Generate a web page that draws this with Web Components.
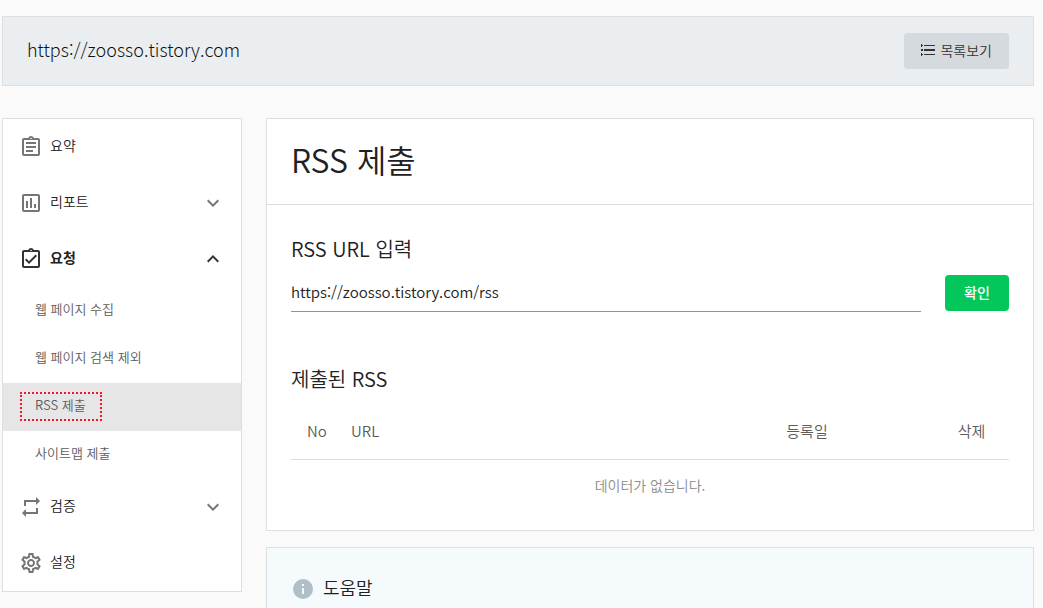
<!DOCTYPE html>
<html lang="ko">
<head>
<meta charset="utf-8">
<meta name="viewport" content="width=device-width, initial-scale=1">
<title>RSS 제출</title>
<style>
  :root{
    --text:#212121;
    --sub:#5c5c5c;
    --muted:#8c8c8c;
    --line:#dedfe0;
    --green:#03c75a;
  }
  body{
    margin:0;
    background:#fafafa;
    color:var(--text);
    font:14px/20px "Noto Sans CJK KR",sans-serif;
    font-weight:350;
  }
</style>
</head>
<body>
<webmaster-app></webmaster-app>

<script>
// path data for the 24px icon grid
const ICONS = {
  summary: 'M7 15h7v2H7zm0-4h10v2H7zm0-4h10v2H7zm12-4h-4.18C14.4 1.84 13.3 1 12 1c-1.3 0-2.4.84-2.82 2H5c-1.1 0-2 .9-2 2v14c0 1.1.9 2 2 2h14c1.1 0 2-.9 2-2V5c0-1.1-.9-2-2-2zm-7-.25c.41 0 .75.34.75.75s-.34.75-.75.75-.75-.34-.75-.75.34-.75.75-.75zM19 19H5V5h14v14z',
  report: 'M19 3H5c-1.1 0-2 .9-2 2v14c0 1.1.9 2 2 2h14c1.1 0 2-.9 2-2V5c0-1.1-.9-2-2-2zm0 16H5V5h14v14zM7 10h2v7H7zm4-3h2v10h-2zm4 6h2v4h-2z',
  request: 'M18 9l-1.41-1.42L10 14.17l-2.59-2.58L6 13l4 4zm1-6h-4.18C14.4 1.84 13.3 1 12 1c-1.3 0-2.4.84-2.82 2H5c-1.1 0-2 .9-2 2v14c0 1.1.9 2 2 2h14c1.1 0 2-.9 2-2V5c0-1.1-.9-2-2-2zm-7-.25c.41 0 .75.34.75.75s-.34.75-.75.75-.75-.34-.75-.75.34-.75.75-.75zM19 19H5V5h14v14z',
  verify: 'M7 7h10v3l4-4-4-4v3H5v6h2V7zm10 10H7v-3l-4 4 4 4v-3h12v-6h-2v4z',
  settings: 'M19.43 12.98c.04-.32.07-.64.07-.98 0-.34-.03-.66-.07-.98l2.11-1.65c.19-.15.24-.42.12-.64l-2-3.46c-.09-.16-.26-.25-.44-.25-.06 0-.12.01-.17.03l-2.49 1c-.52-.4-1.08-.73-1.69-.98l-.38-2.65C14.46 2.18 14.25 2 14 2h-4c-.25 0-.46.18-.49.42l-.38 2.65c-.61.25-1.17.59-1.69.98l-2.49-1c-.06-.02-.12-.03-.18-.03-.17 0-.34.09-.43.25l-2 3.46c-.13.22-.07.49.12.64l2.11 1.65c-.04.32-.07.65-.07.98 0 .33.03.66.07.98l-2.11 1.65c-.19.15-.24.42-.12.64l2 3.46c.09.16.26.25.44.25.06 0 .12-.01.17-.03l2.49-1c.52.4 1.08.73 1.69.98l.38 2.65c.03.24.24.42.49.42h4c.25 0 .46-.18.49-.42l.38-2.65c.61-.25 1.17-.59 1.69-.98l2.49 1c.06.02.12.03.18.03.17 0 .34-.09.43-.25l2-3.46c.12-.22.07-.49-.12-.64l-2.11-1.65zm-1.98-1.71c.04.31.05.52.05.73 0 .21-.02.43-.05.73l-.14 1.13.89.7 1.08.84-.7 1.21-1.27-.51-1.04-.42-.9.68c-.43.32-.84.56-1.25.73l-1.06.43-.16 1.13-.2 1.35h-1.4l-.19-1.35-.16-1.13-1.06-.43c-.43-.18-.83-.41-1.23-.71l-.91-.7-1.06.43-1.27.51-.7-1.21 1.08-.84.89-.7-.14-1.13c-.03-.31-.05-.54-.05-.74s.02-.43.05-.73l.14-1.13-.89-.7-1.08-.84.7-1.21 1.27.51 1.04.42.9-.68c.43-.32.84-.56 1.25-.73l1.06-.43.16-1.13.2-1.35h1.39l.19 1.35.16 1.13 1.06.43c.43.18.83.41 1.23.71l.91.7 1.06-.43 1.27-.51.7 1.21-1.07.85-.89.7.14 1.13zM12 8c-2.21 0-4 1.79-4 4s1.79 4 4 4 4-1.79 4-4-1.79-4-4-4zm0 6c-1.1 0-2-.9-2-2s.9-2 2-2 2 .9 2 2-.9 2-2 2z',
  more: 'M16.59 8.59L12 13.17 7.41 8.59 6 10l6 6 6-6z',
  less: 'M12 8l-6 6 1.41 1.41L12 10.83l4.59 4.58L18 14z',
  info: 'M12 2a10 10 0 1 0 0 20 10 10 0 0 0 0-20zm1 15h-2v-6h2v6zm0-8h-2V7h2v2z',
  // drawn on a 16px grid, see size="16"
  list: 'M1 2h1v3H1zM2 3h1v1H2zM4 3h11v1H4zM1 7h2v2H1zM4 7h11v2H4zM1 11h1v3H1zM2 12h1v1H2zM4 12h11v1H4z'
};

class UiIcon extends HTMLElement {
  constructor(){
    super();
    this.attachShadow({mode:'open'});
  }

  static get observedAttributes(){ return ['name','size']; }

  attributeChangedCallback(){ this.render(); }

  render(){
    const size = this.getAttribute('size')||'24';
    const d = ICONS[this.getAttribute('name')]||'';
    this.shadowRoot.innerHTML = `
      <style>
        :host{display:block;flex:none;width:${size}px;height:${size}px}
        svg{display:block;fill:currentColor}
      </style>
      <svg width="${size}" height="${size}" viewBox="0 0 ${size} ${size}" aria-hidden="true"><path d="${d}"/></svg>
    `;
  }
}
customElements.define('ui-icon', UiIcon);

// top bar: site address on the left, slotted text inside the button
class SiteBar extends HTMLElement {
  constructor(){
    super();
    this.attachShadow({mode:'open'});
    this.shadowRoot.innerHTML = `
      <style>
        :host{display:flex;align-items:center;justify-content:space-between;padding:16px 24px;background:#eaeef1;border:1px solid var(--line)}
        .site{padding-bottom:4px;font-size:18px;line-height:28px;font-weight:300;color:#111}
        button{display:flex;align-items:center;gap:4px;height:36px;padding:0 17px 2px 16px;border:0;border-radius:4px;background:#d5dade;color:#333;font:inherit;cursor:pointer}
      </style>
      <div class="site"></div>
      <button type="button"><ui-icon name="list" size="16"></ui-icon><slot></slot></button>
    `;
  }

  connectedCallback(){
    this.shadowRoot.querySelector('.site').textContent = this.getAttribute('site')||'';
  }
}
customElements.define('site-bar', SiteBar);

// one top level menu row, with its sub links in the default slot
class MenuGroup extends HTMLElement {
  constructor(){
    super();
    this.attachShadow({mode:'open'});
    this.shadowRoot.innerHTML = `
      <style>
        :host{display:block}
        .row{display:flex;align-items:center;gap:7px;box-sizing:border-box;width:100%;height:56px;padding:0 16px;border:0;background:none;color:var(--text);font:inherit;text-align:left;text-decoration:none;cursor:pointer}
        ui-icon{color:#757575}
        .label{flex:1;padding-bottom:4px}
        :host([open]) .row{font-weight:700}
        :host([open]) ui-icon{color:#333}
      </style>
      <div class="head"></div>
      <slot></slot>
    `;
  }

  connectedCallback(){ this.render(); }

  render(){
    const icon = this.getAttribute('icon');
    const label = this.getAttribute('label');
    const open = this.hasAttribute('open');
    const head = this.shadowRoot.querySelector('.head');
    const inner = `<ui-icon name="${icon}"></ui-icon><span class="label">${label}</span>`;
    if(this.hasAttribute('expandable')){
      head.innerHTML = `<button class="row" type="button" aria-expanded="${open}">${inner}<ui-icon name="${open ? 'less' : 'more'}"></ui-icon></button>`;
    } else {
      head.innerHTML = `<a class="row" href="#${icon}">${inner}</a>`;
    }
  }
}
customElements.define('menu-group', MenuGroup);

class MenuLink extends HTMLElement {
  constructor(){
    super();
    this.attachShadow({mode:'open'});
    this.shadowRoot.innerHTML = `
      <style>
        :host{display:block;position:relative}
        a{display:block;padding:12px 32px 16px;color:var(--sub);font-size:13px;line-height:20px;text-decoration:none}
        :host([current]) a{background:#e6e6e6}
        /* red marker over the current entry */
        :host([current])::after{content:"";position:absolute;top:9px;bottom:10px;left:17px;width:82px;box-sizing:border-box;border:2px dotted #ed1c24;pointer-events:none}
      </style>
      <a><slot></slot></a>
    `;
  }

  connectedCallback(){
    this.shadowRoot.querySelector('a').href = this.getAttribute('href')||'#';
  }
}
customElements.define('menu-link', MenuLink);

class SideMenu extends HTMLElement {
  constructor(){
    super();
    this.attachShadow({mode:'open'});
    this.shadowRoot.innerHTML = `
      <style>
        :host{display:block;background:#fff;border:1px solid var(--line)}
      </style>
      <nav><slot></slot></nav>
    `;
  }
}
customElements.define('side-menu', SideMenu);

class RssPanel extends HTMLElement {
  constructor(){
    super();
    this.attachShadow({mode:'open'});
    this.shadowRoot.innerHTML = `
      <style>
        :host{display:block;background:#fff;border:1px solid var(--line)}
        h1{margin:0;padding:16px 24px 21px;border-bottom:1px solid var(--line);font-size:32px;line-height:48px;font-weight:inherit}
        .body{padding:30px 24px 16px}
        h2,label{display:block;margin:0;font-size:20px;line-height:28px;font-weight:inherit}
        form{display:grid;grid-template-columns:1fr 64px;column-gap:24px;align-items:start;margin-bottom:53px}
        label{grid-column:1 / -1;margin-bottom:12px}
        input{box-sizing:border-box;width:100%;height:37px;padding:0 0 4px;border:0;border-bottom:1px solid #949494;border-radius:0;background:none;color:inherit;font:inherit;font-size:15px;outline:0}
        button{height:36px;padding:0 0 2px;border:0;border-radius:4px;background:var(--green);color:#fff;font:inherit;font-weight:500;cursor:pointer}
        table{width:100%;margin-top:10px;border-collapse:collapse;table-layout:fixed}
        th{height:56px;padding:0;border-bottom:1px solid var(--line);color:var(--sub);font-size:15px;font-weight:inherit;text-align:center}
        th.left{padding-left:16px;text-align:left}
        td{height:50px;padding:0 0 4px;color:var(--muted);text-align:center}
        .no{width:44px}
        .date{width:254px}
        .del{width:75px}
      </style>
      <h1></h1>
      <div class="body">
        <form>
          <label for="url">RSS URL 입력</label>
          <input id="url" type="text">
          <button type="submit">확인</button>
        </form>
        <h2>제출된 RSS</h2>
        <table>
          <colgroup><col class="no"><col><col class="date"><col class="del"></colgroup>
          <thead><tr><th class="left">No</th><th class="left">URL</th><th>등록일</th><th>삭제</th></tr></thead>
          <tbody><tr><td colspan="4"><slot></slot></td></tr></tbody>
        </table>
      </div>
    `;
    this.shadowRoot.querySelector('form').addEventListener('submit', e => e.preventDefault());
  }

  connectedCallback(){
    this.shadowRoot.querySelector('h1').textContent = this.getAttribute('heading')||'';
    this.shadowRoot.querySelector('input').value = this.getAttribute('url')||'';
  }
}
customElements.define('rss-panel', RssPanel);

class HelpPanel extends HTMLElement {
  constructor(){
    super();
    this.attachShadow({mode:'open'});
    this.shadowRoot.innerHTML = `
      <style>
        :host{display:block;padding:25px 24px;background:#f5fafd;border:1px solid var(--line)}
        h2{display:flex;align-items:center;gap:8px;margin:0;font-size:18px;line-height:28px;font-weight:inherit}
        ui-icon{color:#b0bec5}
        span{padding-bottom:4px}
      </style>
      <h2><ui-icon name="info"></ui-icon><span><slot></slot></span></h2>
    `;
  }
}
customElements.define('help-panel', HelpPanel);

class WebmasterApp extends HTMLElement {
  constructor(){
    super();
    this.attachShadow({mode:'open'});
    this.shadowRoot.innerHTML = `
      <style>
        :host{display:block;height:100vh;box-sizing:border-box;padding:16px 9px 0 2px;overflow:hidden}
        .layout{display:grid;grid-template-columns:240px 1fr;gap:24px;align-items:start;margin-top:32px}
        main{display:grid;gap:16px}
      </style>
      <site-bar site="https://zoosso.tistory.com">목록보기</site-bar>
      <div class="layout">
        <side-menu>
          <menu-group icon="summary" label="요약"></menu-group>
          <menu-group icon="report" label="리포트" expandable></menu-group>
          <menu-group icon="request" label="요청" expandable open>
            <menu-link href="#crawl">웹 페이지 수집</menu-link>
            <menu-link href="#exclude">웹 페이지 검색 제외</menu-link>
            <menu-link href="#rss" current>RSS 제출</menu-link>
            <menu-link href="#sitemap">사이트맵 제출</menu-link>
          </menu-group>
          <menu-group icon="verify" label="검증" expandable></menu-group>
          <menu-group icon="settings" label="설정"></menu-group>
        </side-menu>
        <main>
          <rss-panel heading="RSS 제출" url="https://zoosso.tistory.com/rss">데이터가 없습니다.</rss-panel>
          <help-panel>도움말</help-panel>
        </main>
      </div>
    `;
  }
}
customElements.define('webmaster-app', WebmasterApp);
</script>
</body>
</html>
